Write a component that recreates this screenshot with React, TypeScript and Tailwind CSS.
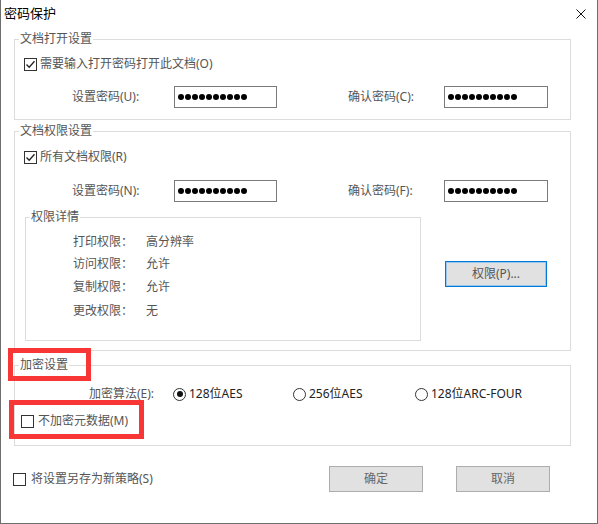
import type { ReactNode } from 'react';

const font = "font-['Noto_Sans','Noto_Sans_CJK_SC',sans-serif]";

function CheckBox({ checked }: { checked?: boolean }) {
  return (
    <span className="flex h-[13px] w-[13px] shrink-0 items-center justify-center border border-[#333] bg-white">
      {checked ? (
        <svg width="11" height="11" viewBox="0 0 11 11">
          <polyline points="1.5,5.5 4.2,8.3 9.5,2.2" fill="none" stroke="#222" strokeWidth="1.3" />
        </svg>
      ) : null}
    </span>
  );
}

function Radio({ checked }: { checked?: boolean }) {
  return (
    <span className="flex h-[13px] w-[13px] shrink-0 items-center justify-center rounded-full border border-[#333] bg-white">
      {checked ? <span className="h-[6px] w-[6px] rounded-full bg-[#111]" /> : null}
    </span>
  );
}

function Password({ className }: { className: string }) {
  return (
    <div className={`flex h-[22px] shrink-0 items-center gap-[1px] border border-[#7a7a7a] bg-white pl-[3px] ${className}`}>
      {Array.from({ length: 10 }).map((_, i) => (
        <span key={i} className="h-[6px] w-[6px] rounded-full bg-black" />
      ))}
    </div>
  );
}

function Group({ title, className, children }: { title: string; className?: string; children: ReactNode }) {
  return (
    <fieldset className={`border border-[#dcdcdc] ${className ?? ''}`}>
      <legend className="ml-[4px] px-[1px] text-[12px] leading-[16px] text-[#555]">{title}</legend>
      {children}
    </fieldset>
  );
}

const perms = [
  { label: '打印权限：', value: '高分辨率', mt: 'mt-[9px]' },
  { label: '访问权限：', value: '允许', mt: 'mt-[6px]' },
  { label: '复制权限：', value: '允许', mt: 'mt-[7px]' },
  { label: '更改权限：', value: '无', mt: 'mt-[8px]' }
];

export default function App() {
  return (
    <div className={`relative h-[524px] w-[598px] overflow-hidden border-x border-b border-[#6e6e6e] bg-white text-[12px] text-[#555] ${font}`}>
      {/* Title bar */}
      <div className="flex h-[26px] items-center justify-between pl-[3px] pr-[11px]">
        <span className="text-[13px] leading-[16px] text-black">密码保护</span>
        <svg width="10" height="10" viewBox="0 0 10 10" className="mt-[1px]">
          <path d="M0.5 0.5 L9.5 9.5 M9.5 0.5 L0.5 9.5" stroke="#111" strokeWidth="1" />
        </svg>
      </div>

      {/* 文档打开设置 */}
      <Group title="文档打开设置" className="ml-[13px] mt-[5px] w-[557px] pb-[11px]">
        <label className="mt-[9px] flex h-[16px] items-center gap-[3px] pl-[9px] leading-[16px]">
          <CheckBox checked />
          <span>需要输入打开密码打开此文档(O)</span>
        </label>
        <div className="mt-[14px] flex items-center">
          <span className="ml-[57px] w-[102px] leading-[16px]">设置密码(U):</span>
          <Password className="w-[103px]" />
          <span className="ml-[71px] w-[96px] leading-[16px]">确认密码(C):</span>
          <Password className="w-[104px]" />
        </div>
      </Group>

      {/* 文档权限设置 */}
      <Group title="文档权限设置" className="ml-[13px] mt-[3px] w-[557px] pb-[9px]">
        <label className="mt-[10px] flex h-[16px] items-center gap-[3px] pl-[9px] leading-[16px]">
          <CheckBox checked />
          <span>所有文档权限(R)</span>
        </label>
        <div className="mt-[15px] flex items-center">
          <span className="ml-[57px] w-[102px] leading-[16px]">设置密码(N):</span>
          <Password className="w-[103px]" />
          <span className="ml-[71px] w-[96px] leading-[16px]">确认密码(F):</span>
          <Password className="w-[104px]" />
        </div>
        <div className="mt-[7px] flex items-start">
          <Group title="权限详情" className="ml-[10px] h-[132px] w-[396px]">
            {perms.map((p) => (
              <div key={p.label} className={`${p.mt} flex h-[16px] items-center leading-[16px]`}>
                <span className="ml-[47px] w-[73px]">{p.label}</span>
                <span>{p.value}</span>
              </div>
            ))}
          </Group>
          <button
            type="button"
            className="ml-[24px] mt-[52px] flex h-[26px] w-[102px] items-center justify-center border border-[#0078d7] bg-[#e1e1e1] text-[12px] leading-[16px] text-[#555] shadow-[inset_0_0_0_1px_#9cc7ef]"
          >
            权限(P)...
          </button>
        </div>
      </Group>

      {/* 加密设置 */}
      <Group title="加密设置" className="ml-[13px] mt-[6px] w-[557px] pb-[16px]">
        <div className="mt-[13px] flex h-[16px] items-center leading-[16px]">
          <span className="ml-[74px] w-[84px]">加密算法(E):</span>
          <label className="flex w-[120px] items-center gap-[3px] text-[#222]">
            <Radio checked />
            <span>128位AES</span>
          </label>
          <label className="flex w-[122px] items-center gap-[3px] text-[#222]">
            <Radio />
            <span>256位AES</span>
          </label>
          <label className="flex items-center gap-[3px] text-[#222]">
            <Radio />
            <span>128位ARC-FOUR</span>
          </label>
        </div>
        <label className="mt-[11px] flex h-[16px] items-center gap-[4px] pl-[6px] leading-[16px]">
          <CheckBox />
          <span>不加密元数据(M)</span>
        </label>
      </Group>

      {/* Bottom row */}
      <div className="mt-[20px] flex items-center">
        <label className="ml-[12px] flex items-center gap-[5px] leading-[16px]">
          <CheckBox />
          <span>将设置另存为新策略(S)</span>
        </label>
        <button
          type="button"
          className="ml-auto flex h-[26px] w-[94px] items-center justify-center border border-[#adadad] bg-[#e1e1e1] text-[12px] leading-[16px] text-[#666]"
        >
          确定
        </button>
        <button
          type="button"
          className="ml-[33px] mr-[47px] flex h-[26px] w-[94px] items-center justify-center border border-[#adadad] bg-[#e1e1e1] text-[12px] leading-[16px] text-[#666]"
        >
          取消
        </button>
      </div>

      {/* Red annotation boxes */}
      <div className="absolute left-[7px] top-[348px] h-[33px] w-[83px] border-[5px] border-[#f93636]" />
      <div className="absolute left-[8px] top-[400px] h-[39px] w-[135px] border-[5px] border-[#f93636]" />
    </div>
  );
}
